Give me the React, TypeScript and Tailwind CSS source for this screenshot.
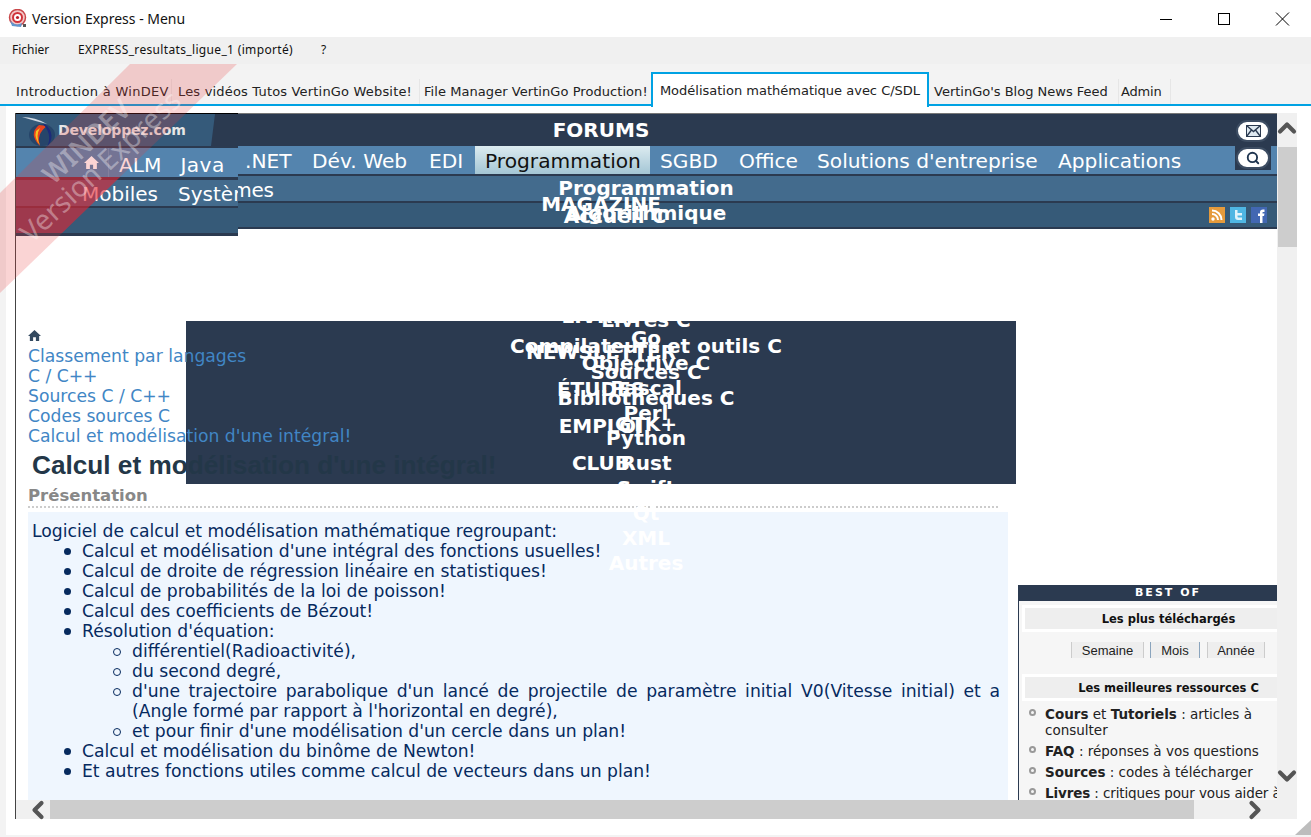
import { ChevronUp, ChevronDown, ChevronLeft, ChevronRight, Search } from "lucide-react";

const bullets = [
  "Calcul et modélisation d'une intégral des fonctions usuelles!",
  "Calcul de droite de régression linéaire en statistiques!",
  "Calcul de probabilités de la loi de poisson!",
  "Calcul des coefficients de Bézout!",
];

const HomeGlyph = ({ className }: { className: string }) => (
  <svg viewBox="0 0 14 14" className={className} fill="currentColor">
    <path d="M7 1 L14 7.5 L12 7.5 L12 13 L8.5 13 L8.5 9 L5.5 9 L5.5 13 L2 13 L2 7.5 L0 7.5Z" />
  </svg>
);

const ListDot = () => (
  <span className="absolute left-[-16px] top-[3px] h-[7px] w-[7px] rounded-full border-2 border-[#999]"></span>
);

const Disc = () => <span className="absolute left-[-18px] top-[7px] h-[7px] w-[7px] rounded-full bg-[#062a5e]"></span>;
const Ring = () => <span className="absolute left-[-19px] top-[7px] h-[8px] w-[8px] rounded-full border border-[#062a5e]"></span>;

const App = () => {
  return (
    <div className="relative flex h-[837px] w-[1311px] flex-col overflow-hidden bg-[#f3f3f3] font-['DejaVu_Sans',sans-serif]">
      {/* Title bar */}
      <div className="flex h-[37px] shrink-0 items-center bg-white pl-[8px] font-['Noto_Sans',sans-serif] text-[14px] text-[#111]">
        <svg width="20" height="20" viewBox="0 0 20 20" className="mr-[4px]">
          <circle cx="9.5" cy="8.5" r="8" fill="#f3c9c9" stroke="#c9474a" strokeWidth="1.5" />
          <circle cx="9.5" cy="8.5" r="4.5" fill="#fff" stroke="#d0333a" strokeWidth="2" />
          <circle cx="9.5" cy="8.5" r="1.6" fill="#b81f28" />
          <path d="M2 11 Q7 18 14 14 L13 18 L4 17Z" fill="#5f97cf" />
          <rect x="15" y="15" width="3" height="3" fill="#555" />
        </svg>
        <span>Version Express - Menu</span>
        <div className="ml-auto flex items-center">
          <svg width="58" height="14" viewBox="0 0 58 14"><path d="M23 7.5 H35" stroke="#000" strokeWidth="1" /></svg>
          <svg width="58" height="14" viewBox="0 0 58 14"><rect x="23.5" y="1.5" width="11" height="11" fill="none" stroke="#000" strokeWidth="1" /></svg>
          <svg width="58" height="14" viewBox="0 0 58 14"><path d="M23 0.5 L36 13.5 M36 0.5 L23 13.5" stroke="#000" strokeWidth="1" /></svg>
        </div>
      </div>

      {/* Menu bar */}
      <div className="flex h-[27px] shrink-0 items-center bg-[#f0f0f0] pb-[2px] pl-[12px] font-['Noto_Sans',sans-serif] text-[12px] text-[#111]">
        <span className="w-[66px]">Fichier</span>
        <span className="w-[243px] tracking-[0.34px]">EXPRESS_resultats_ligue_1 (importé)</span>
        <span>?</span>
      </div>

      {/* Tabs */}
      <div className="h-[42px] shrink-0 border-b-2 border-[#00a2e3] pl-[6px] text-[13px] text-[#222]">
        <div className="relative top-[3px] flex h-[40px] w-full items-end">
          <div className="mb-[3px] flex h-[25px] w-[165px] items-center pl-[10px] tracking-[0.3px]">Introduction à WinDEV</div>
          <div className="mb-[3px] flex h-[25px] w-[248px] items-center border-l border-[#e6e6e6] pl-[6px] tracking-[0.18px]">Les vidéos Tutos VertinGo Website!</div>
          <div className="mb-[3px] flex h-[25px] w-[232px] items-center border-l border-[#e6e6e6] pl-[4px] tracking-[0.06px]">File Manager VertinGo Production!</div>
          <div className="relative z-10 flex h-[35px] w-[278px] items-center justify-center border-2 border-b-0 border-[#00a2e3] bg-white">Modélisation mathématique avec C/SDL</div>
          <div className="mb-[3px] flex h-[25px] w-[189px] items-center pl-[5px]">VertinGo's Blog News Feed</div>
          <div className="mb-[3px] flex h-[25px] w-[53px] items-center border-x border-[#e6e6e6] pl-[2px] tracking-[-0.2px]">Admin</div>
        </div>
      </div>

      {/* Browser area */}
      <div className="ml-[6px] flex h-[729px] flex-col bg-white pl-[9px] pt-[7px]">
        <div className="relative flex h-[706px] w-[1282px] flex-col border-l border-[#444]">
          <div className="absolute left-0 top-0 z-40 h-px w-[222px] bg-black"></div>
          <div className="flex h-[687px]">
            {/* Web page */}
            <div className="relative h-full w-[1261px] overflow-hidden border-t border-[#777] bg-white">
              <div className="h-[32px] bg-[#2b3a50]"></div>
              <div className="flex h-[30px] border-b-2 border-[#2b3a50] bg-[#5484ae] pl-[229px] text-[20.2px] leading-[31px] text-white">
                <div className="w-[67px]">.NET</div>
                <div className="w-[117px]">Dév. Web</div>
                <div className="w-[46px]">EDI</div>
                <div className="w-[175px] bg-gradient-to-b from-[#dcebf0] to-[#a4c6d5] pl-[10px] text-[#111]">Programmation</div>
                <div className="w-[89px] pl-[10px]">SGBD</div>
                <div className="w-[78px]">Office</div>
                <div className="w-[241px]">Solutions d'entreprise</div>
                <div>Applications</div>
              </div>
              <div className="flex h-[27px] gap-[20px] border-b-2 border-[#2b3a50] bg-[#436b8d] pl-[66px] text-[20px] leading-[27px] text-white">
                <span>Mobiles</span>
                <span className="relative top-[1px] tracking-[-0.2px]">Systèmes</span>
              </div>
              <div className="flex h-[26px] items-center justify-end gap-[5px] border-b-2 border-[#2b3a50] bg-[#365a78] pr-[10px]">
                <svg width="16" height="16" viewBox="0 0 16 16"><rect width="16" height="16" fill="#e59a3c" /><circle cx="4" cy="12" r="1.7" fill="#fff" /><path d="M3 7 A6 6 0 0 1 9 13 M3 3.5 A9.5 9.5 0 0 1 12.5 13" fill="none" stroke="#fff" strokeWidth="2" /></svg>
                <svg width="16" height="16" viewBox="0 0 16 16"><rect width="16" height="16" fill="#4fb6e3" /><path d="M5 3 V10 Q5 13 8 13 H12 V10.5 H8.5 Q7.5 10.5 7.5 9.5 V8.5 H12 V6 H7.5 V3Z" fill="#dff3fb" /></svg>
                <svg width="16" height="16" viewBox="0 0 16 16"><rect width="16" height="16" fill="#4267b2" /><path d="M9 16 V9 H7 V6.5 H9 V5 Q9 2.5 12 2.5 H13.5 V5 H12 Q11.5 5 11.5 5.5 V6.5 H13.5 L13 9 H11.5 V16Z" fill="#fff" /></svg>
              </div>

              {/* Mail + search buttons */}
              <div className="absolute left-[1219px] top-[6px] flex w-[36px] flex-col items-center">
                <div className="flex h-[26px] w-[36px] items-start justify-center">
                  <div className="flex h-[22px] w-[34px] items-center justify-center rounded-full border-2 border-[#3d4d63] bg-white">
                    <svg width="15" height="12" viewBox="0 0 15 12"><rect x="0.5" y="0.5" width="14" height="11" fill="#dfe9f0" stroke="#2b3a50" /><path d="M0.5 0.5 L7.5 6.5 L14.5 0.5 M0.5 11.5 L5.5 5 M14.5 11.5 L9.5 5" fill="none" stroke="#2b3a50" strokeWidth="1.4" /></svg>
                  </div>
                </div>
                <div className="flex h-[24px] w-[36px] items-center justify-center bg-[#2b3a50]">
                  <div className="flex h-[22px] w-[34px] items-center justify-center rounded-full border-2 border-[#3d4d63] bg-white">
                    <Search size={14} strokeWidth={3.2} className="text-[#1f3550]" />
                  </div>
                </div>
              </div>

              {/* Page flow */}
              <div className="flex">
                <div className="w-[1002px] pl-[12px]">
                  <div className="pt-[100px] text-[#33495f]">
                    <HomeGlyph className="h-[13px] w-[13px]" />
                  </div>
                  <div className="relative z-20 mt-[4px] text-[17.2px] leading-[20px] text-[#4186c5]">
                    <div>Classement par langages</div>
                    <div>C / C++</div>
                    <div>Sources C / C++</div>
                    <div>Codes sources C</div>
                    <div>Calcul et modélisation d'une intégral!</div>
                  </div>
                  <div className="relative z-20 mt-[4px] whitespace-nowrap pl-[4px] font-['Liberation_Sans',sans-serif] text-[26.2px] font-bold leading-[30px] text-[#233748]">
                    Calcul et modélisation d'une intégral!
                  </div>
                  <div className="mt-[5px] h-[23px] w-[970px] border-b-2 border-dotted border-[#ccc] text-[16.5px] font-bold leading-[22px] text-[#888]">Présentation</div>
                  <div className="mt-[4px] h-[300px] w-[980px] bg-[#eff6fe] pl-[4px] pr-[8px] pt-[9px] text-[17.2px] leading-[20px] text-[#062a5e]">
                    <div>Logiciel de calcul et modélisation mathématique regroupant:</div>
                    <ul className="pl-[50px]">
                      {bullets.map((item) => (
                        <li key={item} className="relative"><Disc />{item}</li>
                      ))}
                      <li className="relative">
                        <Disc />
                        Résolution d'équation:
                        <ul className="pl-[50px]">
                          <li className="relative"><Ring />différentiel(Radioactivité),</li>
                          <li className="relative"><Ring />du second degré,</li>
                          <li className="relative text-justify"><Ring />d'une trajectoire parabolique d'un lancé de projectile de paramètre initial V0(Vitesse initial) et a (Angle formé par rapport à l'horizontal en degré),</li>
                          <li className="relative"><Ring />et pour finir d'une modélisation d'un cercle dans un plan!</li>
                        </ul>
                      </li>
                      <li className="relative"><Disc />Calcul et modélisation du binôme de Newton!</li>
                      <li className="relative"><Disc />Et autres fonctions utiles comme calcul de vecteurs dans un plan!</li>
                    </ul>
                  </div>
                </div>

                {/* Best of sidebar */}
                <div className="mt-[356px] w-[259px] shrink-0 border-l border-[#2b3a50] bg-[#f6f6f6] text-[13.5px] leading-[16px] text-[#222]">
                  <div className="ml-[-1px] h-[16px] w-[300px] bg-[#2b3a50] text-center text-[11px] font-bold leading-[16px] tracking-[2px] text-white">BEST OF</div>
                  <div className="pl-[3px] pt-[4px]">
                    <div className="h-[27px] w-[293px] border-[3px] border-white bg-[#eeeeee] text-center text-[11.5px] font-bold leading-[23px] text-[#111]">Les plus téléchargés</div>
                    <div className="flex h-[42px] w-[256px] items-start justify-end pr-[13px] pt-[10px] font-['Liberation_Sans',sans-serif] text-[13px] text-[#222]">
                      <div className="flex h-[16px] w-[73px] items-center justify-center border-x border-[#ccc] bg-[#eee] pt-[1px]">Semaine</div>
                      <div className="ml-[6px] flex h-[16px] w-[50px] items-center justify-center border-x border-[#8aa4bd] bg-[#eee] pt-[1px]">Mois</div>
                      <div className="ml-[7px] flex h-[16px] w-[58px] items-center justify-center border-x border-[#ccc] bg-[#eee] pt-[1px]">Année</div>
                    </div>
                    <div className="h-[27px] w-[293px] border-[3px] border-white bg-[#eeeeee] text-center text-[11.5px] font-bold leading-[23px] text-[#111]">Les meilleures ressources C</div>
                  </div>
                  <ul className="whitespace-nowrap pl-[26px] pt-[5px]">
                    <li className="relative">
                      <ListDot />
                      <b>Cours</b> et <b>Tutoriels</b> : articles à<br />consulter
                    </li>
                    <li className="relative mt-[5px]">
                      <ListDot />
                      <b>FAQ</b> : réponses à vos questions
                    </li>
                    <li className="relative mt-[5px]">
                      <ListDot />
                      <b>Sources</b> : codes à télécharger
                    </li>
                    <li className="relative mt-[5px] tracking-[-0.12px]">
                      <ListDot />
                      <b>Livres</b> : critiques pour vous aider à
                    </li>
                  </ul>
                </div>
              </div>

              {/* Dark dropdown that landed in the middle of the page */}
              <div className="absolute left-[170px] top-[207px] z-10 h-[163px] w-[830px] bg-[#2b3a50]"></div>

              {/* Broken menu: stacked white labels */}
              <div className="absolute left-[485px] top-[3px] z-30 flex w-[200px] flex-col items-center text-[20px] font-bold leading-[26px] text-white">
                <span>FORUMS</span>
                <span className="mt-[48px]">MAGAZINE</span>
                <span className="mt-[86px]">LIVRES</span>
                <span className="mt-[10px]">NEWSLETTER</span>
                <span className="mt-[11px]">ÉTUDES</span>
                <span className="mt-[11px]">EMPLOI</span>
                <span className="mt-[11px]">CLUB</span>
              </div>
              <div className="absolute left-[480px] top-[62px] z-30 flex w-[300px] flex-col items-center text-[20px] font-bold leading-[25px] text-white">
                <span>Programmation</span>
                <span>Algorithmique</span>
                <span className="mt-[100px]">Go</span>
                <span>Objective C</span>
                <span>Pascal</span>
                <span>Perl</span>
                <span>Python</span>
                <span>Rust</span>
                <span>Swift</span>
                <span>Qt</span>
                <span>XML</span>
                <span>Autres</span>
              </div>
              <div className="absolute left-[480px] top-[89px] z-30 flex w-[300px] flex-col items-center text-[20px] font-bold leading-[26px] text-white">
                <span className="relative left-[-31px]">Accueil C</span>
                <span className="mt-[78px]">Livres C</span>
                <span>Compilateurs et outils C</span>
                <span>Sources C</span>
                <span>Bibliothèques C</span>
              </div>
              <div className="absolute left-[480px] top-[297px] z-30 flex w-[300px] flex-col items-center text-[20px] font-bold leading-[26px] text-white">
                <span>GTK+</span>
              </div>

              {/* Shifted copy of the left of the header */}
              <div className="absolute left-0 top-0 z-40 h-[122px] w-[222px] overflow-hidden bg-[#2b3a50]">
                <div className="relative h-[32px] bg-[#2b3a50]">
                  <div className="flex h-full w-[199px] items-center bg-[#355a7a] pl-[42px] [clip-path:polygon(0_0,100%_0,98%_100%,0_100%)]">
                    <span className="text-[14px] font-bold tracking-[-0.15px] text-[#e6e6e6]">Developpez.com</span>
                  </div>
                  <svg width="40" height="34" viewBox="0 0 40 34" className="absolute left-[5px] top-0">
                    <ellipse cx="21" cy="21" rx="13" ry="11" fill="#17305a" opacity="0.5" />
                    <path d="M18 11 Q7 20 19 32 Q15 20 26 12Z" fill="#e8431e" />
                    <path d="M15 17 Q13 24 19 31 Q14 22 19 14Z" fill="#f4c21f" />
                    <path d="M24 10 Q36 21 26 33 Q32 21 22 10Z" fill="#1c2a7a" />
                    <path d="M1 3 Q14 3 26 10 Q14 7 1 3Z" fill="#cfd8e2" />
                  </svg>
                </div>
                <div className="flex h-[34px] border-b-[3px] border-t-2 border-[#2b3a50] bg-[#5484ae] text-[20.2px] leading-[34px] text-white">
                  <div className="flex w-[92px] justify-end pr-[9px] pt-[7px]"><HomeGlyph className="h-[15px] w-[15px]" /></div>
                  <div className="h-full border-l border-[#6a94b8] pl-[10px]">ALM</div>
                  <div className="pl-[19px] tracking-[0.4px]">Java</div>
                </div>
                <div className="flex h-[26px] gap-[20px] bg-[#436b8d] pl-[66px] text-[20px] leading-[28px] text-white">
                  <span>Mobiles</span>
                  <span>Systèmes</span>
                </div>
                <div className="h-[30px] border-b-[3px] border-t-[2px] border-[#2b3a50] bg-[#365a78]"></div>
              </div>
            </div>

            {/* Vertical scrollbar */}
            <div className="relative flex w-[20px] flex-col items-center bg-[#f0f0f0] pt-[34px]">
              <ChevronUp size={28} strokeWidth={3.6} className="absolute left-[-4px] top-[1px] text-[#555]" />
              <div className="h-[100px] w-[19px] bg-[#cdcdcd]"></div>
              <ChevronDown size={28} strokeWidth={3.6} className="absolute bottom-[10px] left-[-4px] text-[#555]" />
            </div>
          </div>

          {/* Horizontal scrollbar */}
          <div className="relative flex h-[19px] items-center bg-[#f0f0f0]">
            <ChevronLeft size={28} strokeWidth={3.6} className="absolute left-[8px] text-[#555]" />
            <div className="ml-[34px] h-[19px] w-[1144px] bg-[#cdcdcd]"></div>
            <ChevronRight size={28} strokeWidth={3.6} className="absolute left-[1225px] text-[#555]" />
          </div>
        </div>
      </div>
      <svg width="16" height="15" viewBox="0 0 16 15" className="absolute bottom-[2px] right-0"><path d="M16 0 V15 H0Z" fill="#bdbdbd" /></svg>

      {/* Watermark ribbon */}
      <svg width="240" height="305" viewBox="0 0 240 305" className="pointer-events-none absolute left-0 top-0 z-50">
        <polygon points="130,64 237,64 0,293 0,193" fill="#e83a3a" fillOpacity="0.22" />
        <polygon points="16,177 120,177 62,233 16,233" fill="#e0202f" fillOpacity="0.5" />
        <g transform="rotate(-43 101 167)" fill="#fff" fillOpacity="0.36" fontFamily="'Noto Sans', sans-serif" textAnchor="middle">
          <text x="108" y="148" fontSize="27" fontWeight="600">WINDEV</text>
          <text x="101" y="176" fontSize="28">Version Express</text>
        </g>
      </svg>
    </div>
  );
};

export default App;
